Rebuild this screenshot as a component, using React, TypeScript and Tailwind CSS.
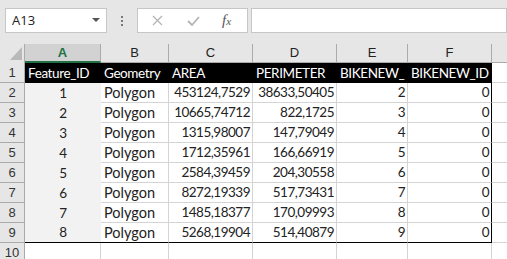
import React from "react";

const cols = ["A", "B", "C", "D", "E", "F"];
const head = ["Feature_ID", "Geometry", "AREA", "PERIMETER", "BIKENEW_", "BIKENEW_ID"];
const rows = [
  ["1", "Polygon", "453124,7529", "38633,50405", "2", "0"],
  ["2", "Polygon", "10665,74712", "822,1725", "3", "0"],
  ["3", "Polygon", "1315,98007", "147,79049", "4", "0"],
  ["4", "Polygon", "1712,35961", "166,66919", "5", "0"],
  ["5", "Polygon", "2584,39459", "204,30558", "6", "0"],
  ["6", "Polygon", "8272,19339", "517,73431", "7", "0"],
  ["7", "Polygon", "1485,18377", "170,09993", "8", "0"],
  ["8", "Polygon", "5268,19904", "514,40879", "9", "0"],
];

const cellFont = "font-['Lato','Liberation_Sans',sans-serif] text-[14.5px]";
const numFont = "font-['Lato','Liberation_Sans',sans-serif] text-[13.5px] tracking-[-0.5px]";
const headFont = "font-['Lato','Liberation_Sans',sans-serif] text-[13.5px] tracking-[-0.4px]";

export default function App() {
  return (
    <div className="w-[507px] h-[259px] overflow-hidden bg-[#e6e6e6] font-['Liberation_Sans',sans-serif]">
      {/* formula bar */}
      <div className="flex h-[44px] pt-[8px]">
        <div className="ml-[5px] flex h-[25px] w-[102px] items-center justify-between border border-[#c6c6c6] bg-white pl-[6px] pr-[6px]">
          <span className="font-['Open_Sans',sans-serif] text-[13px] text-[#222]">A13</span>
          <svg width="8" height="5" viewBox="0 0 8 5">
            <path d="M0 0 L8 0 L4 4 Z" fill="#555" />
          </svg>
        </div>
        <div className="flex h-[25px] w-[30px] flex-col items-center justify-center gap-[2px]">
          <div className="h-[2px] w-[2px] bg-[#777]" />
          <div className="h-[2px] w-[2px] bg-[#777]" />
          <div className="h-[2px] w-[2px] bg-[#777]" />
        </div>
        <div className="flex h-[25px] w-[111px] items-center border border-[#c6c6c6] bg-white">
          <svg className="ml-[14px]" width="11" height="11" viewBox="0 0 11 11">
            <path d="M1 1 L10 10 M10 1 L1 10" stroke="#b4b4b4" strokeWidth="1.3" />
          </svg>
          <svg className="ml-[24px]" width="13" height="10" viewBox="0 0 13 10">
            <path d="M1 5 L5 9 L12 1" stroke="#b4b4b4" strokeWidth="1.8" fill="none" />
          </svg>
          <span className="ml-[22px] font-['Liberation_Serif',serif] text-[15px] italic text-[#555]">
            f<span className="text-[11px]">x</span>
          </span>
        </div>
        <div className="ml-[3px] h-[25px] flex-1 border border-[#c6c6c6] bg-white" />
      </div>

      {/* sheet */}
      <div className="grid grid-cols-[25px_76px_68px_84px_84px_71px_84px_1fr] grid-rows-[19px_repeat(10,20px)]">
        {/* header row */}
        <div className="relative border-r border-[#ababab] bg-[#e6e6e6]">
          <svg className="absolute left-[10px] top-[3px]" width="12" height="13" viewBox="0 0 12 13">
            <path d="M12 0 L12 13 L0 13 Z" fill="#b9b9b9" />
          </svg>
        </div>
        {cols.map((c, i) => (
          <div
            key={c}
            className={
              i === 0
                ? "flex items-center justify-center border-b-2 border-r border-b-[#217346] border-r-[#ababab] bg-[#d2d2d2] text-[13px] font-bold text-[#217346]"
                : "flex items-center justify-center border-r border-b border-[#ababab] bg-[#e6e6e6] text-[13px] text-[#222]"
            }
          >
            {c}
          </div>
        ))}
        <div className="border-b border-[#ababab] bg-[#e6e6e6]" />

        {/* row 1 */}
        <div className="flex items-center justify-center border-r border-b border-[#ababab] bg-[#e6e6e6] text-[13px] text-[#333]">1</div>
        {head.map((h) => (
          <div key={h} className={`flex items-center overflow-hidden whitespace-nowrap bg-black pl-[3px] text-white ${headFont}`}>
            {h}
          </div>
        ))}
        <div className="border-b border-[#d4d4d4] bg-white" />

        {rows.map((r, ri) => {
          const last = ri === rows.length - 1;
          const bb = last ? "border-b border-b-black" : "border-b border-b-[#d4d4d4]";
          return (
            <React.Fragment key={ri}>
              <div className="flex items-center justify-center border-r border-b border-[#ababab] bg-[#e6e6e6] text-[13px] text-[#333]">
                {ri + 2}
              </div>
              <div className={`flex items-center justify-center bg-[#f2f2f2] text-[#222] ${numFont} ${last ? "border-b border-b-black" : ""}`}>
                {r[0]}
              </div>
              <div className={`flex items-center border-r border-r-[#d4d4d4] bg-white pl-[3px] text-[#222] ${bb} ${cellFont}`}>{r[1]}</div>
              <div className={`flex items-center justify-end border-r border-r-[#d4d4d4] bg-white pr-[2px] text-[#222] ${bb} ${numFont}`}>{r[2]}</div>
              <div className={`flex items-center justify-end border-r border-r-[#d4d4d4] bg-white pr-[2px] text-[#222] ${bb} ${numFont}`}>{r[3]}</div>
              <div className={`flex items-center justify-end border-r border-r-[#d4d4d4] bg-white pr-[2px] text-[#222] ${bb} ${numFont}`}>{r[4]}</div>
              <div className={`flex items-center justify-end border-r border-r-black bg-white pr-[2px] text-[#222] ${bb} ${numFont}`}>{r[5]}</div>
              <div className="border-b border-[#d4d4d4] bg-white" />
            </React.Fragment>
          );
        })}

        {/* row 10 */}
        <div className="flex items-center justify-center border-r border-[#ababab] bg-[#e6e6e6] text-[13px] text-[#333]">10</div>
        <div className="border-r border-[#d4d4d4] bg-white" />
        <div className="border-r border-[#d4d4d4] bg-white" />
        <div className="border-r border-[#d4d4d4] bg-white" />
        <div className="border-r border-[#d4d4d4] bg-white" />
        <div className="border-r border-[#d4d4d4] bg-white" />
        <div className="border-r border-[#d4d4d4] bg-white" />
        <div className="bg-white" />
      </div>
    </div>
  );
}
